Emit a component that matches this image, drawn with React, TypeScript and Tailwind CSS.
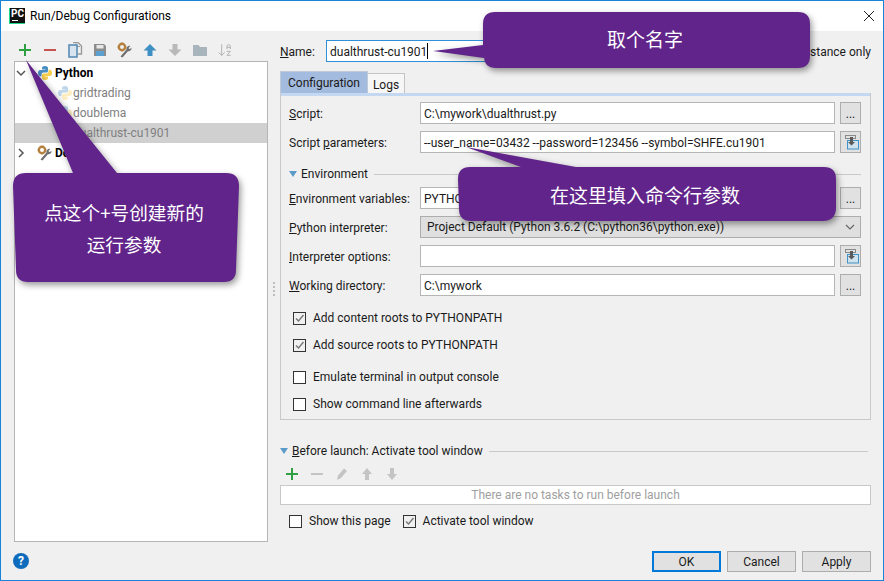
import React from "react";
import { ArrowDownAZ } from "lucide-react";

function PythonIcon({ faded = false }: { faded?: boolean }) {
  const blue = "M8 1C5.6 1 5 2 5 3v1.4h3.2V5H3.2C2 5 1 6 1 8s1 3.2 2.2 3.2h1.3V9.6C4.5 8.4 5.4 7.6 6.5 7.6h3c.9 0 1.5-.7 1.5-1.5V3c0-1.2-1.3-2-3-2z";
  return (
    <svg width="16" height="16" viewBox="0 0 16 16" className={faded ? "shrink-0 opacity-35" : "shrink-0"}>
      <path d={blue} fill="#4a8fc4" />
      <path d={blue} fill="#f7cf4d" transform="rotate(180 8 8)" />
    </svg>
  );
}

function WrenchIcon() {
  return (
    <svg width="16" height="16" viewBox="0 0 16 16" className="shrink-0">
      <circle cx="5" cy="5" r="3.2" fill="none" stroke="#b5803f" strokeWidth="2.4" />
      <path d="M5 0.8v1M5 8.2v1M0.8 5h1M8.2 5h1" stroke="#b5803f" strokeWidth="1.6" />
      <path d="M3.5 14.5 9.5 7.5c-.4-2 1.2-4 3.8-3.6l-1.8 2 1 1.3 2-1.4c.3 2.3-1.600 3.900-3.600 3.500L5.500 15.500z" fill="#6e6e6e" />
    </svg>
  );
}

function Plus({ color = "#2ea043" }: { color?: string }) {
  return (
    <svg width="16" height="16" viewBox="0 0 16 16" className="shrink-0">
      <path d="M8 2v12M2 8h12" stroke={color} strokeWidth="2" />
    </svg>
  );
}

function Minus({ color }: { color: string }) {
  return (
    <svg width="16" height="16" viewBox="0 0 16 16" className="shrink-0">
      <path d="M2 8h12" stroke={color} strokeWidth="2" />
    </svg>
  );
}

function Arrow({ color, down = false, small = false }: { color: string; down?: boolean; small?: boolean }) {
  return (
    <svg width="16" height="16" viewBox="0 0 16 16" className="shrink-0">
      <path
        d={small ? "M8 2 13 8H10V14H6V8H3z" : "M8 2 14.500 8.500H10.500V14H5.500V8.500H1.500z"}
        fill={color}
        transform={down ? "rotate(180 8 8)" : undefined}
      />
    </svg>
  );
}

function CopyIcon() {
  return (
    <svg width="16" height="16" viewBox="0 0 16 16" className="shrink-0">
      <path d="M6 .5h5l3.500 3.500v8H11" fill="none" stroke="#9a9a9a" strokeWidth="1.400" />
      <path d="M9 1.500v3h4" fill="none" stroke="#9a9a9a" />
      <rect x="2" y="3" width="8" height="12" fill="#d7e3ee" stroke="#5b8db5" strokeWidth="1.600" />
    </svg>
  );
}

function SaveIcon() {
  return (
    <svg width="16" height="16" viewBox="0 0 16 16" className="shrink-0">
      <path d="M2 2h10l2 2v10H2z" fill="#8c8c8c" />
      <rect x="4.500" y="3" width="7" height="3.500" fill="#e8e8e8" />
      <rect x="4" y="9" width="8" height="5" fill="#5ba0cf" />
    </svg>
  );
}

function FolderIcon() {
  return (
    <svg width="16" height="16" viewBox="0 0 16 16" className="shrink-0">
      <path d="M1 3h5.500l1.500 2h7v9H1z" fill="#a8b5bd" />
    </svg>
  );
}

function PasteIcon() {
  return (
    <svg width="16" height="16" viewBox="0 0 16 16">
      <rect x="2.500" y="1.500" width="10" height="3" fill="none" stroke="#8a8a8a" />
      <rect x="4.500" y="6.500" width="11" height="8.500" fill="#cfe2ee" stroke="#3f93c6" />
      <path d="M7 3v5H5L8.500 11.500 12 8H10V3z" fill="#5a5a5a" />
    </svg>
  );
}

function Chevron({ open }: { open: boolean }) {
  return (
    <svg width="10" height="10" viewBox="0 0 10 10" className="shrink-0">
      <path d={open ? "M1 3 5 7 9 3" : "M3 1 7 5 3 9"} fill="none" stroke="#555" strokeWidth="1.500" />
    </svg>
  );
}

function Triangle() {
  return (
    <svg width="8" height="7" viewBox="0 0 8 7" className="shrink-0">
      <path d="M0 0h8L4 6z" fill="#5b9bc8" />
    </svg>
  );
}

function Check({ checked = false, label }: { checked?: boolean; label: string }) {
  return (
    <div className="flex items-center gap-[7px] h-[14px]">
      <div className={`w-[13px] h-[13px] border border-[#333] ${checked ? "bg-[#f0f0f0]" : "bg-white"}`}>
        {checked && (
          <svg width="11" height="11" viewBox="0 0 11 11">
            <path d="M2 5.500 4.500 8 9.500 2" fill="none" stroke="#777" strokeWidth="1.400" />
          </svg>
        )}
      </div>
      <span className="whitespace-nowrap">{label}</span>
    </div>
  );
}

function Field({ children }: { children?: React.ReactNode }) {
  return (
    <div className="flex-1 h-[22px] bg-white border border-[#b5b5b5] px-[3px] pt-[2px] flex items-center whitespace-nowrap overflow-hidden">
      {children}
    </div>
  );
}

function SideButton({ paste = false }: { paste?: boolean }) {
  return (
    <div className="w-[21px] h-[22px] ml-[5px] bg-[#e1e1e1] border border-[#adadad] flex items-center justify-center">
      {paste ? <PasteIcon /> : <span className="text-[12px] leading-none mt-[2px]">...</span>}
    </div>
  );
}

function Row({ label, hot, rest, children }: { label?: string; hot: string; rest: string; children: React.ReactNode }) {
  return (
    <div className="flex items-center h-[22px]">
      <div className="w-[131px] shrink-0 pt-[2px] whitespace-nowrap">
        {label}
        <span className="underline">{hot}</span>
        {rest}
      </div>
      {children}
    </div>
  );
}

function DialogButton({ label, active = false }: { label: string; active?: boolean }) {
  return (
    <div
      className={`w-[69px] h-[21px] bg-[#e1e1e1] flex items-center justify-center ${
        active ? "border-2 border-[#0078d7]" : "border border-[#adadad]"
      }`}
    >
      {label}
    </div>
  );
}

function TreeRow({
  icon,
  label,
  selected = false,
}: {
  icon: React.ReactNode;
  label: string;
  selected?: boolean;
}) {
  return (
    <div className={`flex items-center h-[20px] pl-[42px] ${selected ? "bg-[#d0d0d0]" : ""}`}>
      {icon}
      <span className="text-[#808080]">{label}</span>
    </div>
  );
}

export default function App() {
  return (
    <div className="relative w-[884px] h-[581px] overflow-hidden border border-[#1883d7] bg-[#f0f0f0] text-[12px] text-[#1a1a1a] flex flex-col font-['Roboto','Noto_Sans_CJK_SC',sans-serif]">
      {/* title bar */}
      <div className="h-[30px] bg-white flex items-center shrink-0">
        <div className="ml-[8px] w-[16px] h-[16px] bg-[#111] border-l border-b border-[#21d789] relative overflow-hidden">
          <span className="absolute left-[1px] top-[0px] text-[10px] leading-[11px] font-bold text-white">PC</span>
          <div className="absolute left-[2px] bottom-[2px] w-[6px] h-[1px] bg-white" />
        </div>
        <span className="ml-[5px] text-[12px] text-black">Run/Debug Configurations</span>
        <svg width="12" height="12" viewBox="0 0 12 12" className="ml-auto mr-[8px]">
          <path d="M1 1 11 11M11 1 1 11" stroke="#222" strokeWidth="1" />
        </svg>
      </div>

      <div className="flex flex-1 min-h-0">
        {/* left column */}
        <div className="w-[267px] shrink-0 pl-[13px] flex flex-col">
          <div className="h-[30px] flex items-center gap-[9px] pl-[3px] pt-[8px]">
            <Plus />
            <Minus color="#c75450" />
            <CopyIcon />
            <SaveIcon />
            <WrenchIcon />
            <Arrow color="#3d8fc4" />
            <Arrow color="#b9b9b9" down />
            <FolderIcon />
            <ArrowDownAZ size={16} color="#b4b4b4" strokeWidth={1.5} className="shrink-0" />
          </div>
          <div className="w-[254px] h-[481px] bg-white border border-[#b5b5b5] pt-[1px]">
            <div className="flex items-center h-[20px] pl-[1px]">
              <Chevron open />
              <div className="ml-[11px]"><PythonIcon /></div>
              <span className="ml-[2px] font-bold text-black">Python</span>
            </div>
            <TreeRow icon={<PythonIcon faded />} label="gridtrading" />
            <TreeRow icon={<PythonIcon faded />} label="doublema" />
            <TreeRow icon={<PythonIcon faded />} label="dualthrust-cu1901" selected />
            <div className="flex items-center h-[20px] pl-[1px]">
              <Chevron open={false} />
              <div className="ml-[11px]"><WrenchIcon /></div>
              <span className="ml-[2px] font-bold text-black">Docker</span>
            </div>
          </div>
          <div className="mt-[11px] ml-[-1px] w-[16px] h-[16px] rounded-full bg-[#0f6cbd] text-white font-bold text-[12px] leading-[16px] text-center">
            ?
          </div>
        </div>

        {/* splitter grip */}
        <div className="w-[12px] shrink-0 pt-[251px] flex justify-center">
          <div className="w-[2px] h-[14px] border-l-2 border-dotted border-[#bdbdbd]" />
        </div>

        {/* right column */}
        <div className="w-[591px] shrink-0 flex flex-col">
          <div className="flex items-center h-[22px] mt-[9px]">
            <span className="w-[46px] shrink-0 pt-[2px]"><span className="underline">N</span>ame:</span>
            <div className="w-[414px] h-[22px] bg-white border border-[#2f8fd8] px-[3px] flex items-center">
              <span className="pt-[2px]">dualthrust-cu1901</span>
              <div className="w-[1px] h-[16px] bg-black" />
            </div>
            <div className="ml-[5px] pt-[1px]">
              <Check label="Single instance only" />
            </div>
          </div>

          {/* tabs */}
          <div className="flex items-end h-[22px] mt-[9px]">
            <div className="w-[88px] h-[22px] bg-[#a3bbde] border border-b-0 border-[#c0c9d6] flex items-center justify-center">
              Configuration
            </div>
            <div className="w-[37px] h-[20px] bg-[#f6f6f6] border border-b-0 border-l-0 border-[#c4c4c4] pt-[2px] flex items-center justify-center">
              Logs
            </div>
          </div>

          {/* configuration panel */}
          <div className="h-[327px] border border-t-0 border-[#c9c9c9] flex flex-col">
            <div className="h-[3px] bg-[#c4d9f1] shrink-0" />
            <div className="pl-[8px] pr-[9px] pt-[6px] flex flex-col">
              <div className="flex flex-col gap-[7px]">
                <Row hot="S" rest="cript:">
                  <Field>C:\mywork\dualthrust.py</Field>
                  <SideButton />
                </Row>
                <Row label="Script " hot="p" rest="arameters:">
                  <Field>--user_name=03432 --password=123456 --symbol=SHFE.cu1901</Field>
                  <SideButton paste />
                </Row>
              </div>
              <div className="flex items-center h-[34px] pt-[8px]">
                <Triangle />
                <span className="ml-[4px]">Environment</span>
                <div className="flex-1 h-[1px] bg-[#c9c9c9] ml-[6px]" />
              </div>
              <div className="flex flex-col gap-[7px]">
                <Row hot="E" rest="nvironment variables:">
                  <Field>PYTHONUNBUFFERED=1</Field>
                  <SideButton />
                </Row>
                <Row hot="P" rest="ython interpreter:">
                  <div className="flex-1 h-[22px] bg-[#dfdfdf] border border-[#adadad] pl-[6px] pr-[5px] flex items-center justify-between whitespace-nowrap">
                    Project Default (Python 3.6.2 (C:\python36\python.exe))
                    <svg width="10" height="10" viewBox="0 0 10 10">
                      <path d="M1 3 5 7 9 3" fill="none" stroke="#666" strokeWidth="1.200" />
                    </svg>
                  </div>
                </Row>
                <Row hot="I" rest="nterpreter options:">
                  <Field />
                  <SideButton paste />
                </Row>
                <Row hot="W" rest="orking directory:">
                  <Field>C:\mywork</Field>
                  <SideButton />
                </Row>
              </div>
              <div className="pl-[4px] pt-[15px] flex flex-col">
                <Check checked label="Add content roots to PYTHONPATH" />
                <div className="mt-[13px]">
                  <Check checked label="Add source roots to PYTHONPATH" />
                </div>
                <div className="mt-[18px]">
                  <Check label="Emulate terminal in output console" />
                </div>
                <div className="mt-[13px]">
                  <Check label="Show command line afterwards" />
                </div>
              </div>
            </div>
          </div>

          {/* before launch */}
          <div className="flex items-center h-[16px] mt-[23px]">
            <Triangle />
            <span className="ml-[4px] whitespace-nowrap">
              <span className="underline">B</span>efore launch: Activate tool window
            </span>
            <div className="flex-1 h-[1px] bg-[#c9c9c9] ml-[6px] mr-[3px]" />
          </div>
          <div className="flex items-center h-[16px] mt-[7px] gap-[9px] pl-[4px]">
            <Plus />
            <Minus color="#c4c4c4" />
            <svg width="16" height="16" viewBox="0 0 16 16" className="shrink-0">
              <path d="M3 14 4 9.500 10 2.500 13 5 7 12z" fill="#c4c4c4" />
            </svg>
            <Arrow color="#c4c4c4" small />
            <Arrow color="#c4c4c4" down small />
          </div>
          <div className="h-[20px] mt-[3px] bg-white border border-[#c9c9c9] flex items-center justify-center text-[#a0a0a0]">
            There are no tasks to run before launch
          </div>
          <div className="flex items-center gap-[12px] pl-[9px] mt-[9px]">
            <Check label="Show this page" />
            <Check checked label="Activate tool window" />
          </div>
          <div className="flex justify-end gap-[6px] mt-[23px]">
            <DialogButton label="OK" active />
            <DialogButton label="Cancel" />
            <DialogButton label="Apply" />
          </div>
        </div>
      </div>

      {/* annotation callouts drawn over the dialog */}
      <svg width="884" height="581" viewBox="0 0 884 581" className="absolute left-[-1px] top-[-1px] pointer-events-none drop-shadow-[2px_3px_3px_rgba(0,0,0,0.4)]">
        <path
          d="M26 60 73 173H226Q239 173 239 186L236 270Q236 282 224 282H28Q16 282 16 270L13 186Q13 173 26 173H117z"
          fill="#61248a"
        />
        <path
          d="M433 51 483 45V24Q483 12 495 12H798Q810 12 810 24V56Q810 68 798 68H496Q484 68 484 56V58z"
          fill="#61248a"
        />
        <path
          d="M466 147 576 167H824Q836 167 836 179V209Q835 221 823 221H471Q459 221 459 209L458 179Q458 167 470 167H521z"
          fill="#61248a"
        />
      </svg>
      <div className="absolute left-[42px] top-[195px] w-[162px] text-center text-white text-[18.67px] leading-[32px] font-['Noto_Sans_CJK_SC',sans-serif]">
        点这个+号创建新的
        <br />
        运行参数
      </div>
      <div className="absolute left-[606px] top-[25px] text-white text-[19px] leading-[26px] font-['Noto_Sans_CJK_SC',sans-serif]">
        取个名字
      </div>
      <div className="absolute left-[549px] top-[181px] text-white text-[19px] leading-[26px] font-['Noto_Sans_CJK_SC',sans-serif]">
        在这里填入命令行参数
      </div>
    </div>
  );
}
